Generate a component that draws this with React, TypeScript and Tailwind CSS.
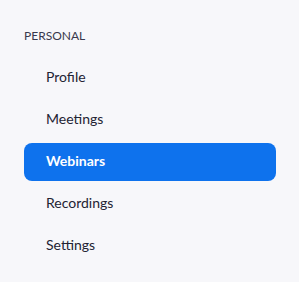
import React from "react";

const items = ["Profile", "Meetings", "Webinars", "Recordings", "Settings"];

export default function App() {
  return (
    <div
      className="w-[299px] h-[282px] bg-[#f7f7fa] pt-[28px] pl-[24px] pr-[23px]"
      style={{ fontFamily: "Lato, 'Noto Sans', sans-serif" }}
    >
      <div className="text-[12px] leading-[16px] text-[#39394d]">PERSONAL</div>
      <div className="mt-[15px] flex flex-col gap-[4px]">
        {items.map((it) => {
          const active = it === "Webinars";
          return (
            <div
              key={it}
              className={
                active
                  ? "h-[38px] rounded-[8px] bg-[#0e72ed] text-white font-bold pl-[22px] flex items-center text-[14px] leading-[20px]"
                  : "h-[38px] rounded-[8px] text-[#232333] font-normal pl-[22px] flex items-center text-[14px] leading-[20px]"
              }
            >
              <span className="-mt-[2px]">{it}</span>
            </div>
          );
        })}
      </div>
    </div>
  );
}
